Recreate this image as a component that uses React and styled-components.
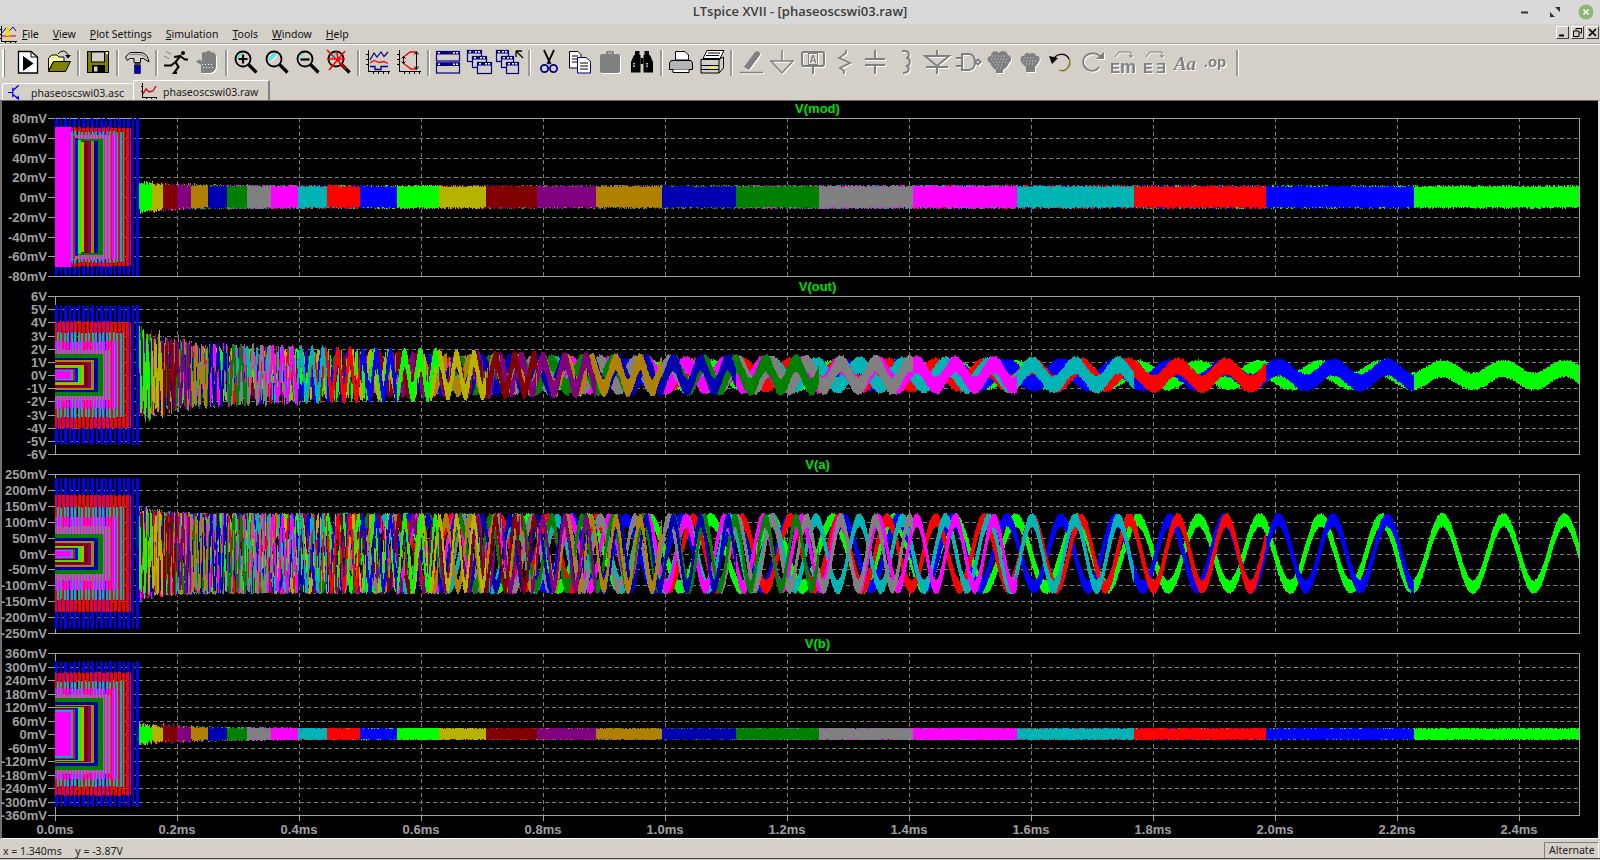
import React from 'react';
import styled, { createGlobalStyle } from 'styled-components';

const GlobalStyle = createGlobalStyle`
  html, body { margin: 0; padding: 0; background: #d4d0c8; overflow: hidden; }
  * { box-sizing: border-box; }
`;

const UI_FONT = '"Noto Sans", "Open Sans", sans-serif';
const PLOT_FONT = '"Liberation Sans", Arial, sans-serif';

const Window = styled.div`
  width: 100vw;
  height: 100vh;
  display: flex;
  flex-direction: column;
  background: #d4d0c8;
  font-family: ${UI_FONT};
  overflow: hidden;
`;

const TitleBar = styled.div`
  height: 24px;
  flex: none;
  background: #d9d9d9;
  display: flex;
  align-items: center;
  justify-content: center;
  position: relative;
  padding-bottom: 2px;
  color: #3c3c3c;
  font-family: "Open Sans", sans-serif;
  font-size: 13px;
  font-weight: 600;
`;

const WindowControls = styled.div`
  position: absolute;
  right: 6px;
  top: 4px;
  display: flex;
  align-items: center;
  gap: 16px;
`;

const MenuBar = styled.div`
  height: 21px;
  flex: none;
  display: flex;
  align-items: center;
  gap: 14px;
  padding: 1px 1px 1px 0;
  border-bottom: 1px solid #fff;
  box-shadow: inset 0 -1px 0 #a0a0a0;
  font-size: 10.5px;
  color: #111;
  position: relative;
`;

const MenuItem = styled.span`
  cursor: default;
  u { text-underline-offset: 1px; }
`;

const ChildControls = styled.div`
  position: absolute;
  right: 1px;
  top: 2px;
  display: flex;
  gap: 2px;
`;

const ChildButton = styled.div`
  width: 13px;
  height: 13px;
  background: #d4d0c8;
  border: 1px solid;
  border-color: #fff #404040 #404040 #fff;
  display: flex;
  align-items: center;
  justify-content: center;
`;

const Toolbar = styled.div`
  height: 35px;
  flex: none;
  display: flex;
  align-items: flex-start;
  padding: 5px 0 0 12px;
  position: relative;
`;

const Grip = styled.div`
  position: absolute;
  left: 2px;
  top: 4px;
  width: 2px;
  height: 28px;
  background: #fff;
  box-shadow: 1px 0 0 #808080;
`;

const ToolButton = styled.div`
  width: 31px;
  height: 24px;
  display: flex;
  align-items: center;
  justify-content: center;
`;

const ToolSep = styled.div`
  width: 8px;
  height: 26px;
  display: flex;
  justify-content: center;
  &:last-child { margin-left: 2px; }
  &::after {
    content: "";
    width: 2px;
    background: #9a9a9a;
    box-shadow: 1px 0 0 #fff;
  }
`;

const Glyph = styled.svg`
  width: 24px;
  height: 24px;
  overflow: visible;
  ${(p) => p.$off && 'filter: drop-shadow(1px 1px 0 #fff);'}
`;

const TabStrip = styled.div`
  height: 20px;
  flex: none;
  display: flex;
  align-items: flex-end;
  padding-left: 2px;
`;

const Tab = styled.div`
  height: ${(p) => (p.$active ? 20 : 17)}px;
  width: ${(p) => (p.$active ? 137 : 131)}px;
  display: flex;
  align-items: center;
  gap: ${(p) => (p.$active ? 6 : 8)}px;
  padding-left: ${(p) => (p.$active ? 7 : 4)}px;
  padding-top: ${(p) => (p.$active ? 2 : 1)}px;
  font-size: 10.5px;
  color: #222;
  background: #d4d0c8;
  border-top: 1px solid #fff;
  border-left: 1px solid #fff;
  border-right: ${(p) => (p.$active ? '2px solid #808080' : 'none')};
  border-radius: 2px 2px 0 0;
`;

const PlotArea = styled.div`
  height: 739px;
  flex: none;
  background: #000;
  border-left: 2px solid #707070;
  border-right: 2px solid #e8e8e8;
  border-bottom: 1px solid #fff;
  border-top: 1px solid #6a6a6a;
  display: flex;
  flex-direction: column;
`;

const Pane = styled.div`
  display: flex;
  flex-direction: column;
  flex: none;
`;

const PaneTitle = styled.div`
  height: 19px;
  flex: none;
  margin-left: 53px;
  width: 1525px;
  display: flex;
  align-items: center;
  justify-content: center;
  color: #00e000;
  font-family: ${PLOT_FONT};
  font-size: 13px;
  font-weight: 700;
  ${Pane}:first-child & { height: 17px; padding-bottom: 2px; }
`;

const Chart = styled.svg`
  display: block;
  flex: none;
  overflow: visible;
`;

const AxisLabel = styled.text`
  fill: #a0a0a0;
  font-family: ${PLOT_FONT};
  font-size: 13px;
  font-weight: 700;
`;

const Frame = styled.rect`
  fill: none;
  stroke: #a0a0a0;
  stroke-width: 1;
  shape-rendering: crispEdges;
`;

const GridLine = styled.line`
  stroke: #7c7c7c;
  stroke-width: 1;
  stroke-dasharray: 4 3;
  shape-rendering: crispEdges;
`;

const Tick = styled.line`
  stroke: #a0a0a0;
  stroke-width: 1;
  shape-rendering: crispEdges;
`;

const Trace = styled.path`
  fill: none;
  stroke-width: 1;
  shape-rendering: crispEdges;
`;

const StatusBar = styled.div`
  height: 20px;
  flex: none;
  display: flex;
  justify-content: space-between;
  align-items: flex-end;
  border-bottom: 1px solid #404040;
  font-size: 10.5px;
  color: #222;
`;

const StatusText = styled.div`
  padding: 0 0 0 3px;
  line-height: 14px;
  white-space: pre;
`;

const ModePanel = styled.div`
  width: 55px;
  height: 16px;
  margin-right: 1px;
  padding-left: 4px;
  line-height: 15px;
  border-top: 1px solid #808080;
  border-left: 1px solid #808080;
  border-right: 1px solid #fff;
`;

// ---- waveform data ----

const X0 = 55;
const X1 = 1579;
const MS = 610;

const GREEN = '#00ff00';
const BLUE = '#0000ff';
const RED = '#ff0000';
const TEAL = '#00b4b4';
const MAGENTA = '#ff00ff';
const GRAY = '#808080';
const DKGREEN = '#008000';
const DKBLUE = '#0000b0';
const BROWN = '#b08000';
const PURPLE = '#800080';
const DKRED = '#800000';
const OLIVE = '#b4b400';
const CYCLE = [GREEN, BLUE, RED, TEAL, MAGENTA, GRAY, DKGREEN, DKBLUE, BROWN, PURPLE, DKRED, OLIVE];

const ENDS = [152, 163, 177, 191, 208, 227, 247, 271, 298, 327, 360, 397, 439, 486, 537, 596, 662, 736, 819, 913, 1017, 1134, 1266, 1414, 1579];
const END_PHASE = [0.24, 0.49, 0.82, 0.365, 0.6, 0.1, 0.75, 0.3, 0.9, 0.45, 0.15, 0.7];

const BLOCK_ENDS = [140, 131, 124, 117, 110, 103, 98, 94, 91, 88, 84, 81, 78, 75, 73, 71];
const BLOCK_COLORS = [BLUE, RED, TEAL, MAGENTA, GRAY, DKGREEN, DKBLUE, BROWN, PURPLE, DKRED, OLIVE, GREEN, BLUE, RED, TEAL, MAGENTA];
const BLOCK_PITCH = [4.5, 4, 3.5, 3, 3, 1, 1, 1, 1, 1, 1, 1, 1, 1, 1, 1];
const BLOCK_FILL = [0.5, 0.6, 0.55, 0.55, 0.65, 1, 1, 1, 1, 1, 1, 1, 1, 1, 1, 1];

function rng(seed) {
  let s = seed;
  return () => {
    s = (s * 1664525 + 1013904223) >>> 0;
    return s / 4294967296;
  };
}

function buildTraces(p) {
  const cy = p.height / 2;
  const out = [];
  for (let i = ENDS.length - 1; i >= 0; i--) {
    const T = ENDS[i];
    const n = ENDS.length - 1 - i;
    const P = (T - X0) / 25;
    const f = END_PHASE[n % 12];
    const A = p.amp(P);
    const rand = rng(i * 97 + p.height * 13 + 5);
    const start = p.flat ? Math.max(136, i > 3 ? ENDS[i - 3] : 136) : 136;
    // short runs are thinned so the runs under them show through as spikes
    const skip = !p.flat && P < 25 ? 0.4 * (25 - P) / 25 + 0.1 : 0;
    let d = '';
    for (let x = start; x < T; x++) {
      if (x < ENDS[Math.max(i - 1, 0)] && rand() < skip) continue;
      const boost = p.boost * Math.exp(-Math.max(0, x - 140) / p.decay);
      const y1 = cy - A * Math.cos(2 * Math.PI * ((x - T) / P + f));
      const y2 = cy - A * Math.cos(2 * Math.PI * ((x + 1 - T) / P + f));
      const top = Math.min(y1, y2) - (p.ripple + boost * rand()) * (0.82 + 0.22 * rand());
      const bot = Math.max(y1, y2) + (p.ripple + boost * rand()) * (0.82 + 0.22 * rand());
      d += `M${x}.5 ${Math.round(top)}V${Math.round(bot)}`;
    }
    out.push({ color: CYCLE[n % 12], d });
  }
  BLOCK_ENDS.forEach((end, i) => {
    const rand = rng(i * 31 + p.height + 1);
    const half = p.blocks[i];
    const pitch = BLOCK_PITCH[i];
    const fill = BLOCK_FILL[i];
    let d = '';
    for (let x = X0; x < end; x++) {
      if (fill < 1 && (x - X0 + i) % pitch >= pitch * fill) continue;
      const jag = pitch > 1 ? rand() * 1.2 : 0;
      d += `M${x}.5 ${Math.round(cy - half + jag)}V${Math.round(cy + half - jag)}`;
    }
    out.push({ color: BLOCK_COLORS[i], d });
  });
  return out;
}

const range = (from, to, step) => {
  const list = [];
  for (let v = from; v >= to; v -= step) list.push(v);
  return list;
};

const PLOTS = [
  {
    title: 'V(mod)',
    height: 158,
    svgHeight: 159,
    labels: range(80, -80, 20).map((v) => `${v}mV`),
    flat: true,
    amp: () => 0,
    ripple: 11.6,
    boost: 6,
    decay: 45,
    blocks: [79, 70, 66, 63, 63, 58, 56, 56, 56, 56, 55, 57, 59, 62, 65, 70],
  },
  {
    title: 'V(out)',
    height: 158,
    svgHeight: 159,
    labels: range(6, -6, 1).map((v) => `${v}V`),
    amp: (P) => 6.5 + (61 - P) * 0.18 + Math.max(0, 24 - P) * 0.4,
    ripple: 9,
    boost: 22,
    decay: 35,
    blocks: [70, 54, 43, 34, 26, 21, 17, 15, 13, 12, 10, 8, 7, 6, 5, 4],
  },
  {
    title: 'V(a)',
    height: 159,
    svgHeight: 160,
    labels: range(250, -250, 50).map((v) => `${v}mV`),
    amp: () => 33.5,
    ripple: 7,
    boost: 9,
    decay: 25,
    blocks: [76, 59, 47, 37, 28, 20, 16, 13, 11, 10, 8, 7, 6, 5, 4, 3],
  },
  {
    title: 'V(b)',
    height: 162,
    svgHeight: 185,
    labels: range(360, -360, 60).map((v) => `${v}mV`),
    flat: true,
    amp: () => 0,
    ripple: 6.2,
    boost: 7,
    decay: 50,
    timeAxis: true,
    blocks: [73, 62, 53, 46, 40, 36, 32, 29, 28, 28, 27, 27, 26, 25, 24, 22],
  },
];

const TIME_TICKS = range(12, 0, 1).reverse().map((k) => ({ x: X0 + k * 0.2 * MS, label: `${(k * 0.2).toFixed(1)}ms` }));

function Plot({ plot }) {
  const traces = React.useMemo(() => buildTraces(plot), [plot]);
  const n = plot.labels.length - 1;
  return (
    <Pane>
      <PaneTitle>{plot.title}</PaneTitle>
      <Chart width="1596" height={plot.svgHeight} viewBox={`2 0 1596 ${plot.svgHeight}`}>
        {plot.labels.map((label, i) => {
          const y = Math.round((plot.height * i) / n) + 0.5;
          return (
            <g key={label}>
              {i > 0 && i < n && <GridLine x1={X0} x2={X1} y1={y} y2={y} />}
              <Tick x1="48" x2={X0} y1={y} y2={y} />
              <AxisLabel x="47" y={y + 4.5} textAnchor="end">{label}</AxisLabel>
            </g>
          );
        })}
        {TIME_TICKS.map((t) => (
          <g key={t.label}>
            {t.x > X0 && <GridLine x1={Math.round(t.x) + 0.5} x2={Math.round(t.x) + 0.5} y1="0" y2={plot.height} />}
            {plot.timeAxis && <Tick x1={Math.round(t.x) + 0.5} x2={Math.round(t.x) + 0.5} y1={plot.height} y2={plot.height + 6} />}
            {plot.timeAxis && <AxisLabel x={t.x} y={plot.height + 19} textAnchor="middle">{t.label}</AxisLabel>}
          </g>
        ))}
        <Frame x={X0 + 0.5} y="0.5" width={X1 - X0} height={plot.height} />
        {traces.map((t, i) => <Trace key={i} d={t.d} stroke={t.color} />)}
      </Chart>
    </Pane>
  );
}

// ---- toolbar icons ----

const NAVY = '#000080';
const DIM = '#808080';

const Lens = ({ children }) => (
  <>
    <circle cx="9" cy="9" r="7.5" fill="#d4d0c8" stroke="#000" strokeWidth="1.8" />
    <path d="M14.5 14.5L22.5 22.5" stroke="#000" strokeWidth="3.2" />
    {children}
  </>
);

const Win = ({ x, y, w, h, dots }) => (
  <>
    <rect x={x + 0.5} y={y + 0.5} width={w} height={h} fill="#d4d0c8" stroke={NAVY} strokeWidth="1.2" />
    <rect x={x} y={y} width={w + 1} height="3.5" fill={NAVY} />
    {dots && <rect x={x + w - 6} y={y + 1} width="2" height="1.5" fill="#fff" />}
    {dots && <rect x={x + w - 3} y={y + 1} width="2" height="1.5" fill="#fff" />}
    {dots && <rect x={x + 2} y={y + 1} width="2" height="1.5" fill="#fff" />}
  </>
);

const Axes = () => (
  <path d="M2.5 0V21.5H24M0 4.5H2.5M0 9.5H2.5M0 14.5H2.5M7.5 21.5V24M12.5 21.5V24M17.5 21.5V24M22.5 21.5V24" fill="none" stroke="#000" shapeRendering="crispEdges" />
);

const MONO = '"Liberation Sans", sans-serif';

const ICONS = {
  play: (
    <>
      <path d="M2.5 1.5H15L21.5 7V23H2.5Z" fill="#fff" stroke="#000" strokeWidth="1.3" />
      <path d="M15 1.5V7H21.5" fill="none" stroke="#000" />
      <path d="M7 6L17.5 13.5 7 21Z" fill="#000" />
    </>
  ),
  open: (
    <>
      <path d="M1.5 21V8L5 5H10L12 7H17V12H6L1.5 21Z" fill="#ffff99" stroke="#000" />
      <path d="M1.5 21.5L6.5 11.5H23.5L18.5 21.5Z" fill="#808000" stroke="#000" />
      <path d="M11 4C14 0 19 0 21 5" fill="none" stroke="#000" />
      <path d="M18 5H24L21 8.5Z" fill="#000" />
    </>
  ),
  save: (
    <>
      <rect x="1.5" y="1.5" width="21" height="21" fill="#808000" stroke="#000" />
      <rect x="5.5" y="2" width="13" height="10" fill="#d4d0c8" stroke="#000" />
      <rect x="6" y="15" width="13" height="7.5" fill="#000" />
      <rect x="8" y="16.5" width="3.5" height="5" fill="#d4d0c8" />
      <rect x="20" y="2" width="2" height="2" fill="#fff" />
    </>
  ),
  hammer: (
    <>
      <path d="M0.5 7L5 2.5H15C20 2.5 23 6.5 24 12L18.5 8.5H15.5V12.5H9V8.5H4.5L2.5 10.5Z" fill="#d4d0c8" stroke="#000" />
      <path d="M5 4.5H14C17 4.5 19 6 20.5 7.5" fill="none" stroke="#808080" />
      <rect x="9.5" y="12.5" width="6" height="3" fill="#404040" />
      <rect x="9.5" y="15.5" width="6" height="8" fill="#0000c0" stroke="#000" strokeWidth="0.6" />
    </>
  ),
  runner: (
    <>
      <path d="M2 1.5L7 4M0 6L5 8.5" stroke="#808080" fill="none" />
      <circle cx="19" cy="3" r="2" fill="#000" />
      <path d="M17 5L11.5 12L14.5 17L10 23H13M11.5 12L7 15.5H0M16 6L21 9.5H24M16 6L10 7" fill="none" stroke="#000" strokeWidth="2.1" />
    </>
  ),
  hand: (
    <>
      <path d="M6 23V15L1 12L4 9.5L7 11V4C7 1.5 10 1.5 10.5 3C11 0 16 0 16 2.5C18 1.5 21 3 21 6V16C21 20 18 23 15 23Z" fill={DIM} />
      <path d="M7 14.5H19M8 17.5H19" stroke="#fff" strokeDasharray="1 2" fill="none" />
    </>
  ),
  zoomIn: (
    <Lens>
      <path d="M4 7.5L7 3.5" stroke="#00ffff" strokeWidth="1.6" />
      <path d="M4.5 9H13.5M9 4.5V13.5" stroke="#000" strokeWidth="2.2" />
    </Lens>
  ),
  zoomFit: (
    <Lens>
      <path d="M4 10L10 3.5" stroke="#00ffff" strokeWidth="2" />
      <path d="M6 12L12 6" stroke="#fff" strokeWidth="1" />
    </Lens>
  ),
  zoomOut: (
    <Lens>
      <path d="M4 6L7 3.5" stroke="#00ffff" strokeWidth="1.6" />
      <path d="M4.5 9.5H13.5" stroke="#000" strokeWidth="2.2" />
    </Lens>
  ),
  zoomX: (
    <Lens>
      <path d="M4 9L9 3.5" stroke="#00ffff" strokeWidth="2" />
      <path d="M0 0L19 19M18 1L2 20M0 9H18M9 1L13 14" stroke="#ff0000" strokeWidth="1.6" />
    </Lens>
  ),
  plotAdd: (
    <>
      <Axes />
      <path d="M4 10L8 3L11 7L15 2L18 6.5L22 2" fill="none" stroke={NAVY} strokeWidth="1.2" />
      <path d="M4 13L8 10.5L13 12.5L18 11.5L22 13.5" fill="none" stroke="#ff0000" strokeWidth="1.3" />
      <path d="M4 16.5H9V19.5H15V16.5H22" fill="none" stroke={NAVY} strokeWidth="1.3" />
    </>
  ),
  plotAuto: (
    <>
      <Axes />
      <path d="M6 7.5L13 2H19M6 13L14 19H19" fill="none" stroke="#ff0000" strokeWidth="1.3" />
      <path d="M19.5 2V19M17.5 4.5L19.5 1.5L21.5 4.5M17.5 16.5L19.5 19.5L21.5 16.5M6.5 7V13M4.5 8.5L6.5 6.5L8.5 8.5M4.5 11.5L6.5 13.5L8.5 11.5" fill="none" stroke="#000" />
    </>
  ),
  tile: (
    <>
      <Win x={0} y={1} w={23} h={9.5} dots />
      <Win x={0} y={12.5} w={23} h={10} dots />
    </>
  ),
  cascade: (
    <>
      <Win x={0} y={0} w={14} h={11} dots />
      <Win x={5} y={6} w={14} h={11} dots />
      <Win x={10} y={12} w={14} h={11} dots />
    </>
  ),
  cascadeTo: (
    <>
      <Win x={-2} y={0} w={12} h={11} dots />
      <Win x={3} y={6} w={12} h={11} dots />
      <Win x={8} y={12} w={12} h={11} dots />
      <path d="M17 1H23M17 1V7M17.5 1.5L24 8" transform="translate(1 0)" fill="none" stroke="#000" strokeWidth="1.3" />
    </>
  ),
  cut: (
    <>
      <path d="M7 0L13.5 14M17 0L10.5 14" fill="none" stroke="#000" strokeWidth="1.8" />
      <circle cx="7.5" cy="18.5" r="3.6" fill="none" stroke={NAVY} strokeWidth="1.8" />
      <circle cx="16.5" cy="18.5" r="3.6" fill="none" stroke={NAVY} strokeWidth="1.8" />
    </>
  ),
  copy: (
    <>
      <path d="M1.5 1.5H10L13 4.5V18H1.5Z" fill="#fff" stroke="#000" />
      <path d="M4 6H10M4 9H10M4 12H10" stroke="#000" />
      <path d="M9.5 7.5H18L22.5 11.5V23H9.5Z" fill="#fff" stroke={NAVY} />
      <path d="M12 13H20M12 16H20M12 19H20" stroke="#000" />
    </>
  ),
  paste: (
    <>
      <rect x="1" y="4" width="20" height="19" rx="2" fill={DIM} />
      <rect x="7" y="1" width="8" height="5" rx="1" fill={DIM} />
      <path d="M9 3H13" stroke="#d4d0c8" />
    </>
  ),
  find: (
    <>
      <rect x="5" y="1" width="4.5" height="4" fill="#000" />
      <rect x="14.5" y="1" width="4.5" height="4" fill="#000" />
      <path d="M4 5H10.5V22.5H1V12Z" fill="#000" />
      <path d="M13.5 5H20L23 12V22.5H13.5Z" fill="#000" />
      <rect x="10.5" y="8" width="3" height="6" fill="#000" />
      <path d="M4 13V18M17 13V18" stroke="#fff" strokeWidth="1.4" strokeDasharray="1.5 1" />
    </>
  ),
  print: (
    <>
      <path d="M6.5 1.5H16L19.5 5V10H6.5Z" fill="#fff" stroke="#000" />
      <path d="M2 10.5H22L23.5 13V19.5H0.5V13Z" fill="#b4b4b4" stroke="#000" />
      <path d="M4 19.5V22.5H20V19.5" fill="#fff" stroke="#000" />
    </>
  ),
  printSetup: (
    <>
      <path d="M7 0.5H24L20 8.5H3Z" fill="#fff" stroke="#000" />
      <path d="M8 3H20M6 5.5H19" stroke="#000" />
      <path d="M1 9.5H19L23.5 7V18L19 23H1Z" fill="#d4d0c8" stroke="#000" />
      <path d="M1 15.5H19M1 19.5H19M19 9.5V23" stroke="#000" fill="none" />
      <rect x="10" y="16.5" width="5" height="2" fill="#ffff00" />
    </>
  ),
};

const OFF_ICONS = {
  wire: (
    <>
      <path d="M5 17L16 2C18 0 22 2 21 5L10 20Z" fill={DIM} />
      <path d="M1 22.5H24" stroke={DIM} strokeWidth="1.5" />
    </>
  ),
  ground: <path d="M12 0V11M0 11H24M1 11L12 23L23 11" fill="none" stroke={DIM} strokeWidth="1.5" />,
  label: (
    <>
      <rect x="1" y="2" width="22" height="14" rx="2" fill="none" stroke={DIM} strokeWidth="2" />
      <path d="M12 16V24" stroke={DIM} strokeWidth="2" />
      <rect x="7.5" y="3.5" width="9" height="11" fill="none" stroke={DIM} />
      <text x="12" y="13" textAnchor="middle" fontSize="10" fontWeight="700" fontFamily={PLOT_FONT} fill={DIM}>A</text>
    </>
  ),
  resistor: <path d="M14 0V3L7 8L18 13L8 18L12 21V24" fill="none" stroke={DIM} strokeWidth="1.8" />,
  cap: <path d="M12 0V9M2 9H22M2 15H22M12 15V24" fill="none" stroke={DIM} strokeWidth="2" />,
  inductor: <path d="M8 1H11C16 1 16 8 12 8C17 8 17 16 12 16C16 16 16 23 9 23" fill="none" stroke={DIM} strokeWidth="2" />,
  diode: <path d="M12 0V6M0 6H24L12 16ZM1 17H23M12 17V24" fill="none" stroke={DIM} strokeWidth="2" />,
  gate: (
    <path d="M6 4H13C21 4 21 20 13 20H6ZM0 8H6M0 16H6M19 12L22 9.5L24.5 12L22 14.5Z" fill="none" stroke={DIM} strokeWidth="2" />
  ),
  component: (
    <>
      <path d="M3 13C-1 11 0 6 4 6C4 1 9 0 12 3C14 0 20 0 21 5C25 6 25 11 22 13C21 16 18 19 16 20V23H9V20C7 19 4 16 3 13Z" fill={DIM} />
      <path d="M5 6H20M4 9H22M6 12H20M8 15H17M10 18H15" stroke="#d4d0c8" strokeDasharray="1 2" fill="none" />
    </>
  ),
  move: (
    <>
      <path d="M4 13C1 10 3 5 6 6C7 2 11 2 12 4C14 2 18 3 18 6C22 5 23 10 20 13C19 15 18 16 17 17V22H8V17C7 16 5 15 4 13Z" fill={DIM} />
      <path d="M6 8H18M5 11H20M8 14H17" stroke="#d4d0c8" strokeDasharray="1 2" fill="none" />
    </>
  ),
  redo: (
    <>
      <path d="M21 8C17 1 5 2 3 11C3 21 15 24 19 17" fill="none" stroke={DIM} strokeWidth="1.8" />
      <path d="M16 9H24V2Z" fill={DIM} />
    </>
  ),
  drag: (
    <>
      <path d="M4 7L8 2H20V7M18 5L20 7.5L22 5" fill="none" stroke={DIM} />
      <text x="-1" y="23" fontSize="15" fontWeight="700" fontFamily={MONO} fill={DIM}>E</text>
      <text x="9" y="23" fontSize="18" fontWeight="700" fontFamily={MONO} fill={DIM}>m</text>
    </>
  ),
  mirror: (
    <>
      <path d="M4 7L8 2H20V7M18 5L20 7.5L22 5" fill="none" stroke={DIM} />
      <text x="1" y="23" fontSize="15" fontWeight="700" fontFamily={MONO} fill={DIM}>E</text>
      <text x="14" y="23" fontSize="15" fontWeight="700" fontFamily={MONO} fill={DIM}>Ǝ</text>
    </>
  ),
  text: (
    <text x="12" y="20" textAnchor="middle" fontSize="19" fontStyle="italic" fontWeight="700" fontFamily='"Liberation Serif", serif' fill={DIM}>Aa</text>
  ),
  spice: (
    <text x="11" y="17" textAnchor="middle" fontSize="15" fontWeight="700" fontFamily={PLOT_FONT} fill={DIM}>.op</text>
  ),
};

const Undo = () => (
  <>
    <path d="M4 11C6 3 17 2 20 9" fill="none" stroke="#000" strokeWidth="1.3" />
    <path d="M20 9C23 15 17 23 10 20" fill="none" stroke="#807000" strokeWidth="1.3" />
    <path d="M0 6L9 8L3 14Z" fill="#000" />
  </>
);

const TOOLBAR = [
  ['play', 'open'], ['save'], ['hammer'], ['runner', 'hand'],
  ['zoomIn', 'zoomFit', 'zoomOut', 'zoomX'], ['plotAdd', 'plotAuto'],
  ['tile', 'cascade', 'cascadeTo'], ['cut', 'copy', 'paste', 'find'], ['print', 'printSetup'],
  ['wire', 'ground', 'label', 'resistor', 'cap', 'inductor', 'diode', 'gate', 'component', 'move', 'undo', 'redo', 'drag', 'mirror', 'text', 'spice'],
];

const DISABLED = ['hand', 'paste'];

function ToolIcon({ name }) {
  if (name === 'undo') {
    return <Glyph viewBox="0 0 24 24"><Undo /></Glyph>;
  }
  const off = name in OFF_ICONS || DISABLED.includes(name);
  return (
    <Glyph viewBox="0 0 24 24" $off={off}>
      {OFF_ICONS[name] || ICONS[name]}
    </Glyph>
  );
}

const AppIcon = styled.svg`
  flex: none;
  margin-right: -9px;
`;

const TabIcon = styled.svg`
  flex: none;
`;

const MENU = ['File', 'View', 'Plot Settings', 'Simulation', 'Tools', 'Window', 'Help'];

export default function App() {
  return (
    <Window>
      <GlobalStyle />
      <TitleBar>
        LTspice XVII - [phaseoscswi03.raw]
        <WindowControls>
          <svg width="14" height="14" viewBox="0 0 14 14"><path d="M3 7.5H10" stroke="#333" strokeWidth="2" /></svg>
          <svg width="14" height="14" viewBox="0 0 14 14"><path d="M7 2H12V7ZM2 7V12H7Z" fill="#333" /></svg>
          <svg width="16" height="16" viewBox="0 0 16 16">
            <circle cx="8" cy="8" r="7.5" fill="#8fb573" />
            <path d="M5.5 5.5L10.5 10.5M10.5 5.5L5.5 10.5" stroke="#fff" strokeWidth="1.6" />
          </svg>
        </WindowControls>
      </TitleBar>
      <MenuBar>
        <AppIcon width="17" height="17" viewBox="0 0 17 17">
          <path d="M1.5 0V15.5H17M0 3.5H1.5M0 8.5H1.5M0 12.5H1.5M5.5 15.5V17M10.5 15.5V17M15.5 15.5V17" fill="none" stroke="#000" shapeRendering="crispEdges" />
          <path d="M2 7L6 2L9 5L13 1L16 5" fill="none" stroke="#0000c0" />
          <path d="M2 10H16" stroke="#d00000" />
          <rect x="6" y="1" width="3.5" height="9" fill="#ffd800" />
          <rect x="6" y="12" width="3.5" height="3" fill="#ffd800" />
        </AppIcon>
        {MENU.map((m) => (
          <MenuItem key={m}><u>{m[0]}</u>{m.slice(1)}</MenuItem>
        ))}
        <ChildControls>
          <ChildButton><svg width="9" height="9" viewBox="0 0 9 9"><path d="M1 7.5H6" stroke="#000" strokeWidth="2" /></svg></ChildButton>
          <ChildButton><svg width="9" height="9" viewBox="0 0 9 9"><path d="M3 2.5V.5H8.5V5H6.5M.5 3H6V8.5H.5Z" fill="none" stroke="#000" /></svg></ChildButton>
          <ChildButton><svg width="9" height="9" viewBox="0 0 9 9"><path d="M1 1L8 8M8 1L1 8" stroke="#000" strokeWidth="1.7" /></svg></ChildButton>
        </ChildControls>
      </MenuBar>
      <Toolbar>
        <Grip />
        {TOOLBAR.map((group, g) => (
          <React.Fragment key={g}>
            {group.map((name) => (
              <ToolButton key={name}><ToolIcon name={name} /></ToolButton>
            ))}
            <ToolSep />
          </React.Fragment>
        ))}
      </Toolbar>
      <TabStrip>
        <Tab>
          <TabIcon width="16" height="15" viewBox="0 0 16 17">
            <path d="M0 8.5H5M5.5 3V14M6 6L12 0.5M6 11L11 15" fill="none" stroke="#0000e0" strokeWidth="1.4" />
            <path d="M9 15L13 17L12 12Z" fill="#0000e0" />
          </TabIcon>
          phaseoscswi03.asc
        </Tab>
        <Tab $active>
          <TabIcon width="16" height="17" viewBox="0 0 16 17">
            <path d="M1.5 0V14.5H16M0 3.5H1.5M0 8.5H1.5M5.5 14.5V16M10.5 14.5V16M15 14.5V16" fill="none" stroke="#000" shapeRendering="crispEdges" />
            <path d="M2 11L5 6L8 9L12 8L15 3" fill="none" stroke="#e00000" strokeWidth="1.4" />
          </TabIcon>
          phaseoscswi03.raw
        </Tab>
      </TabStrip>
      <PlotArea>
        {PLOTS.map((p) => <Plot key={p.title} plot={p} />)}
      </PlotArea>
      <StatusBar>
        <StatusText>x = 1.340ms     y = -3.87V</StatusText>
        <ModePanel>Alternate</ModePanel>
      </StatusBar>
    </Window>
  );
}
